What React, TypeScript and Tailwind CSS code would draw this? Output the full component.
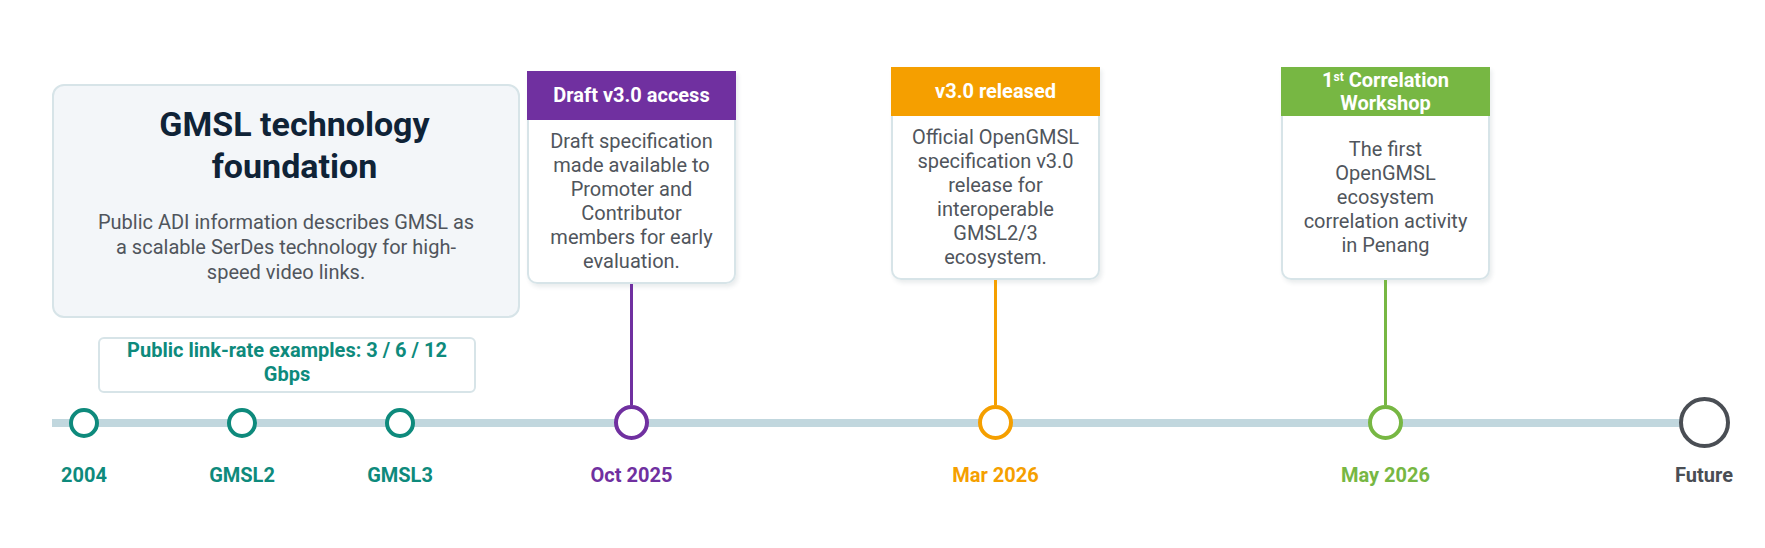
import { type ReactNode } from 'react';

type EventCard = {
    title: ReactNode;
    lines: string[];
    date: string;
    header: string;
    text: string;
    border: string;
    line: string;
    offset: string;
    connector: string;
};

const events: EventCard[] = [
    {
        title: 'Draft v3.0 access',
        lines: ['Draft specification', 'made available to', 'Promoter and', 'Contributor', 'members for early', 'evaluation.'],
        date: 'Oct 2025',
        header: 'bg-[#7030a0]',
        text: 'text-[#7030a0]',
        border: 'border-[#7030a0]',
        line: 'bg-[#7030a0]',
        offset: 'ml-[7px] pt-[71px]',
        connector: 'h-[121px]',
    },
    {
        title: 'v3.0 released',
        lines: ['Official OpenGMSL', 'specification v3.0', 'release for', 'interoperable', 'GMSL2/3', 'ecosystem.'],
        date: 'Mar 2026',
        header: 'bg-[#f59f00]',
        text: 'text-[#f59f00]',
        border: 'border-[#f59f00]',
        line: 'bg-[#f59f00]',
        offset: 'ml-[155px] pt-[67px]',
        connector: 'h-[125px]',
    },
    {
        title: (
            <>
                1<sup className="text-[12px]">st</sup> Correlation
                <br />
                Workshop
            </>
        ),
        lines: ['The first', 'OpenGMSL', 'ecosystem', 'correlation activity', 'in Penang'],
        date: 'May 2026',
        header: 'bg-[#77b743]',
        text: 'text-[#77b743]',
        border: 'border-[#77b743]',
        line: 'bg-[#77b743]',
        offset: 'ml-[181px] pt-[67px]',
        connector: 'h-[125px]',
    },
];

const milestones = ['2004', 'GMSL2', 'GMSL3'];

function EventColumn({ ev }: { ev: EventCard }) {
    return (
        <div className={`w-[209px] shrink-0 flex flex-col items-center ${ev.offset}`}>
            <div className="w-full h-[213px] flex flex-col shadow-[2px_3px_4px_rgba(40,70,80,0.10)] rounded-b-[10px]">
                <div className={`h-[49px] shrink-0 flex items-center justify-center text-center text-white font-bold text-[20px] leading-[23px] ${ev.header}`}>
                    <div>{ev.title}</div>
                </div>
                <div className="flex-1 bg-white border-2 border-t-0 border-[#d7e4e8] rounded-b-[10px] flex items-center justify-center text-center text-[20px] leading-[24px] text-[#50555c]">
                    <p>
                        {ev.lines.map((l, i) => (
                            <span key={i}>
                                {l}
                                {i < ev.lines.length - 1 && <br />}
                            </span>
                        ))}
                    </p>
                </div>
            </div>
            <div className={`w-[3px] ${ev.connector} ${ev.line}`} />
            <div className={`w-[35px] h-[35px] rounded-full border-4 bg-white ${ev.border}`} />
            <div className={`mt-[23px] whitespace-nowrap font-bold text-[20px] leading-[24px] ${ev.text}`}>{ev.date}</div>
        </div>
    );
}

export default function App() {
    return (
        <div className="relative w-[1765px] h-[548px] overflow-hidden bg-white font-['Roboto',sans-serif]">
            {/* timeline track, sits under the nodes */}
            <div className="absolute left-[52px] top-[419px] w-[1630px] h-[8px] bg-[#c1d7de]" />

            <div className="relative flex">
                <div className="w-[520px] shrink-0 flex flex-col pt-[84px]">
                    <div className="ml-[52px] w-[468px] h-[234px] rounded-[12px] border-2 border-[#d7e4e8] bg-[#f3f6f9] flex flex-col items-center pt-[17px] text-center">
                        <h1 className="pl-[17px] font-bold text-[34px] leading-[42px] text-[#0f2337]">
                            GMSL technology
                            <br />
                            foundation
                        </h1>
                        <p className="mt-[23px] text-[20px] leading-[25px] text-[#50555c]">
                            Public ADI information describes GMSL as
                            <br />
                            a scalable SerDes technology for high-
                            <br />
                            speed video links.
                        </p>
                    </div>

                    <div className="mt-[19px] ml-[98px] w-[378px] h-[56px] rounded-[6px] border-2 border-[#d7e4e8] bg-white text-center font-bold text-[20px] leading-[23.5px] text-[#0e8a7c]">
                        Public link-rate examples: 3 / 6 / 12
                        <br />
                        Gbps
                    </div>

                    <div className="mt-[15px] ml-[54px] flex gap-[98px]">
                        {milestones.map((m) => (
                            <div key={m} className="w-[60px] flex flex-col items-center">
                                <div className="w-[30px] h-[30px] rounded-full border-4 border-[#0e8a7c] bg-white" />
                                <div className="mt-[25px] whitespace-nowrap font-bold text-[20px] leading-[24px] text-[#0e8a7c]">{m}</div>
                            </div>
                        ))}
                    </div>
                </div>

                {events.map((ev, i) => (
                    <EventColumn key={i} ev={ev} />
                ))}

                <div className="ml-[184px] w-[60px] shrink-0 flex flex-col items-center pt-[397px]">
                    <div className="w-[51px] h-[51px] rounded-full border-4 border-[#4a4e54] bg-white" />
                    <div className="mt-[15px] whitespace-nowrap font-bold text-[20px] leading-[24px] text-[#4a4e54]">Future</div>
                </div>
            </div>
        </div>
    );
}
